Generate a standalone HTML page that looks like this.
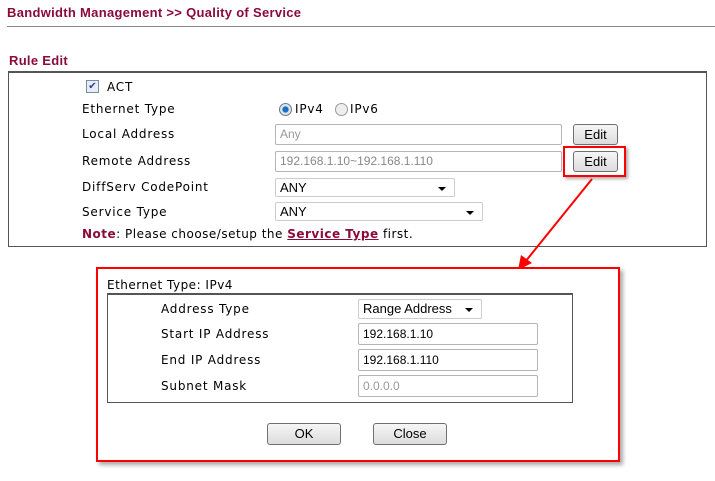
<!DOCTYPE html>
<html><head><meta charset="utf-8"><style>
body{margin:0;width:715px;height:481px;background:#fff;position:relative;font-family:"DejaVu Sans",Verdana,sans-serif;font-size:12px;color:#000;overflow:hidden;letter-spacing:0.8px}
.a{position:absolute;white-space:nowrap}
.t{font-family:"Liberation Sans",Arial,sans-serif;font-weight:bold;color:#8b0a3a;font-size:13px;letter-spacing:0.3px}
.inp{position:absolute;border:1px solid #b5b5b5;background:#fff;box-sizing:border-box;font-family:"Liberation Sans",Arial,sans-serif;font-size:12px;padding-left:4px;line-height:18px;border-radius:2px;letter-spacing:0}
.btn{position:absolute;box-sizing:border-box;border:1px solid #707070;border-radius:3px;background:linear-gradient(#f6f6f6,#dcdcdc);font-family:"Liberation Sans",Arial,sans-serif;font-size:13px;text-align:center;letter-spacing:0}
.sel{position:absolute;box-sizing:border-box;border:1px solid #ccc;background:#fff;font-family:"Liberation Sans",Arial,sans-serif;font-size:13px;padding-left:4px;border-radius:2px;letter-spacing:0}
.sel:after{content:"";position:absolute;right:8px;top:8px;border-left:4px solid transparent;border-right:4px solid transparent;border-top:4px solid #000}
</style></head><body>
<div class="a t" style="left:7px;top:5px">Bandwidth Management &gt;&gt; Quality of Service</div>
<div class="a" style="left:7px;top:26px;width:708px;height:1px;background:#888"></div>
<div class="a t" style="left:9px;top:53px">Rule Edit</div>
<div class="a" style="left:8px;top:71px;width:699px;height:176px;border:1px solid #555;border-top-width:2px;box-sizing:border-box"></div>
<div class="a" style="left:86px;top:80px;width:11px;height:11px;border:1px solid #7a8aa0;background:#e8ecf4;font-size:10px;line-height:11px;text-align:center;color:#2a3f9a;letter-spacing:0">✔</div>
<div class="a" style="left:107px;top:80px">ACT</div>
<div class="a" style="left:82px;top:102px">Ethernet Type</div>
<div class="a" style="left:82px;top:127px">Local Address</div>
<div class="a" style="left:82px;top:154px">Remote Address</div>
<div class="a" style="left:82px;top:180px">DiffServ CodePoint</div>
<div class="a" style="left:82px;top:205px">Service Type</div>
<div class="a" style="left:82px;top:227px;letter-spacing:0.5px"><b style="color:#8b0a3a">Note</b>: Please choose/setup the <b style="color:#8b0a3a;text-decoration:underline">Service Type</b> first.</div>
<div class="a" style="left:279px;top:103px;width:11px;height:11px;border-radius:50%;border:1px solid #777;background:radial-gradient(#1a6fc0 35%,#d8e6f0 45%)"></div>
<div class="a" style="left:295px;top:102px">IPv4</div>
<div class="a" style="left:335px;top:103px;width:11px;height:11px;border-radius:50%;border:1px solid #999;background:#eee"></div>
<div class="a" style="left:350px;top:102px">IPv6</div>
<div class="inp" style="left:275px;top:124px;width:287px;height:21px;color:#999">Any</div>
<div class="btn" style="left:573px;top:124px;width:45px;height:21px;line-height:19px">Edit</div>
<div class="inp" style="left:275px;top:151px;width:287px;height:21px;color:#888">192.168.1.10~192.168.1.110</div>
<div class="btn" style="left:573px;top:151px;width:45px;height:21px;line-height:19px">Edit</div>
<div class="a" style="left:563px;top:146px;width:63px;height:31px;border:2px solid #f00;box-sizing:border-box;box-shadow:2px 2px 3px #aaa"></div>
<div class="sel" style="left:275px;top:178px;width:180px;height:19px;line-height:17px">ANY</div>
<div class="sel" style="left:275px;top:202px;width:208px;height:19px;line-height:17px">ANY</div>
<svg class="a" style="left:0;top:0" width="715" height="481"><line x1="592" y1="179" x2="525" y2="262" stroke="#f00" stroke-width="2"/><polygon points="518,270 521,255 532,263" fill="#f00"/></svg>
<div class="a" style="left:96px;top:267px;width:524px;height:195px;border:2px solid #f00;box-sizing:border-box;box-shadow:3px 3px 4px #aaa;background:#fff"></div>
<div class="a" style="left:107px;top:278px;letter-spacing:0.5px">Ethernet Type: IPv4</div>
<div class="a" style="left:107px;top:293px;width:466px;height:110px;border:1px solid #555;border-top-width:2px;box-sizing:border-box"></div>
<div class="a" style="left:161px;top:302px">Address Type</div>
<div class="a" style="left:161px;top:327px">Start IP Address</div>
<div class="a" style="left:161px;top:353px">End IP Address</div>
<div class="a" style="left:161px;top:379px">Subnet Mask</div>
<div class="sel" style="left:358px;top:299px;width:124px;height:20px;line-height:18px">Range Address</div>
<div class="inp" style="left:358px;top:323px;width:180px;height:22px;line-height:20px">192.168.1.10</div>
<div class="inp" style="left:358px;top:349px;width:180px;height:22px;line-height:20px">192.168.1.110</div>
<div class="inp" style="left:358px;top:375px;width:180px;height:22px;line-height:20px;color:#999">0.0.0.0</div>
<div class="btn" style="left:267px;top:423px;width:74px;height:22px;line-height:20px">OK</div>
<div class="btn" style="left:373px;top:423px;width:74px;height:22px;line-height:20px">Close</div>
</body></html>
